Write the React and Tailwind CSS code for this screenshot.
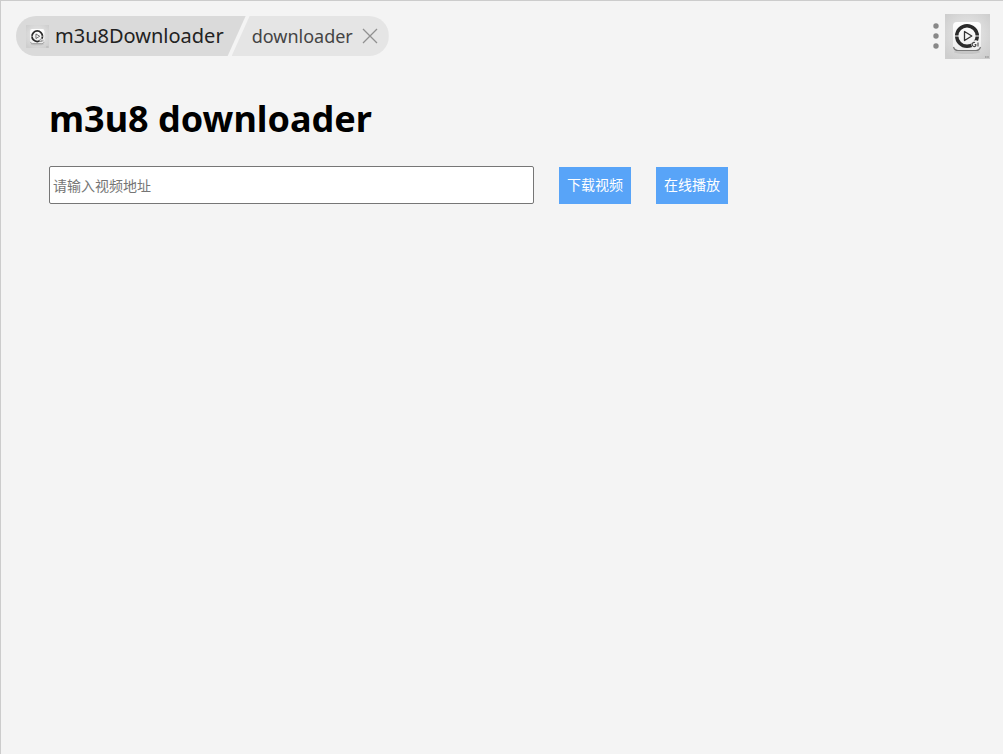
import React, { useState } from 'react';

function AppLogo({ className }) {
  return (
    <svg className={className} viewBox="0 0 45 45" aria-hidden="true">
      <defs>
        <radialGradient id="logo-bg" cx="50%" cy="45%" r="65%">
          <stop offset="0" stopColor="#ececec" />
          <stop offset="0.6" stopColor="#dadada" />
          <stop offset="1" stopColor="#cecece" />
        </radialGradient>
        <linearGradient id="logo-tile" x1="0" y1="0" x2="0" y2="1">
          <stop offset="0" stopColor="#ffffff" />
          <stop offset="1" stopColor="#ededed" />
        </linearGradient>
      </defs>
      <rect width="45" height="45" fill="url(#logo-bg)" />
      <ellipse cx="22" cy="38" rx="13" ry="2" fill="#bdbdbd" opacity="0.7" />
      <rect x="8" y="8" width="28" height="28" rx="4" fill="url(#logo-tile)" />
      <path d="M8.500 33q1 3.500 4.500 3.500h18q3.500 0 4.500-3.500" fill="none" stroke="#777777" strokeWidth="1.200" />
      <circle cx="22" cy="22" r="10.300" fill="none" stroke="#2b2b2b" strokeWidth="3.400" />
      <path d="M9.500 22h4.500M30 22h4.500" stroke="#f4f4f4" strokeWidth="1" />
      <path d="M19.500 17.500v9l7.300-4.500z" fill="#f8f8f8" stroke="#333333" strokeWidth="1.300" strokeLinejoin="round" />
      <circle cx="30.500" cy="30.500" r="4.200" fill="#f2f2f2" />
      <path d="M30 28.500a2.100 2.100 0 1 0 0.800 3.400v-1.300h-1.200" fill="none" stroke="#444444" strokeWidth="1.100" />
      <path d="M33 28.500v4" fill="none" stroke="#444444" strokeWidth="1.100" />
      <path d="M40 43h4" stroke="#9a9a9a" strokeWidth="1.500" strokeDasharray="1.200 0.400" />
    </svg>
  );
}

export default function App() {
  const [url, setUrl] = useState('');

  return (
    <div className="min-h-screen bg-[#f4f4f4] border-t border-l border-[#cccccc] font-['Noto_Sans','Noto_Sans_CJK_SC',sans-serif]">
      {/* Title bar */}
      <header className="flex items-start justify-between pl-[15px] pr-[13px] pt-[13px]">
        <nav className="flex h-10 mt-[2px]">
          <button className="flex items-center gap-[6px] pl-[10px] pr-[22px] rounded-l-full bg-[#dadada] text-xl text-[#222222] [clip-path:polygon(0_0,100%_0,calc(100%-18px)_100%,0_100%)]">
            <AppLogo className="w-[23px] h-[23px]" />
            m3u8Downloader
          </button>
          <div className="flex items-center gap-[9px] -ml-[14px] pl-5 pr-[11px] rounded-r-full bg-[#e5e5e5] text-lg text-[#444444] [clip-path:polygon(18px_0,100%_0,100%_100%,0_100%)]">
            downloader
            <button aria-label="Close">
              <svg className="w-4 h-4" viewBox="0 0 16 16" fill="none" stroke="#909090" strokeWidth="1.300">
                <path d="M1 1l14 14M15 1L1 15" />
              </svg>
            </button>
          </div>
        </nav>
        <div className="flex items-center gap-[6px]">
          <button aria-label="Menu" className="pb-[2px]">
            <svg className="w-[6px] h-[26px]" viewBox="0 0 6 26" fill="#888888">
              <circle cx="3" cy="3" r="2.700" />
              <circle cx="3" cy="13" r="2.700" />
              <circle cx="3" cy="23" r="2.700" />
            </svg>
          </button>
          <AppLogo className="w-[45px] h-[45px]" />
        </div>
      </header>

      <main className="px-12 pt-8">
        <h1 className="text-4xl leading-[56px] font-bold text-black">m3u8 downloader</h1>
        <form className="flex items-center mt-[19px] gap-[25px] text-sm" onSubmit={(e) => e.preventDefault()}>
          <input
            type="text"
            aria-label="视频地址"
            placeholder="请输入视频地址"
            value={url}
            onChange={(e) => setUrl(e.target.value)}
            className="flex-1 min-w-0 max-w-[485px] h-[38px] px-[3px] bg-white border border-[#767676] rounded-[2px] placeholder:text-[#757575]"
          />
          <button type="submit" className="h-[37px] px-2 bg-[#58a4f8] text-white">下载视频</button>
          <button type="button" className="h-[37px] px-2 bg-[#58a4f8] text-white">在线播放</button>
        </form>
      </main>
    </div>
  );
}
